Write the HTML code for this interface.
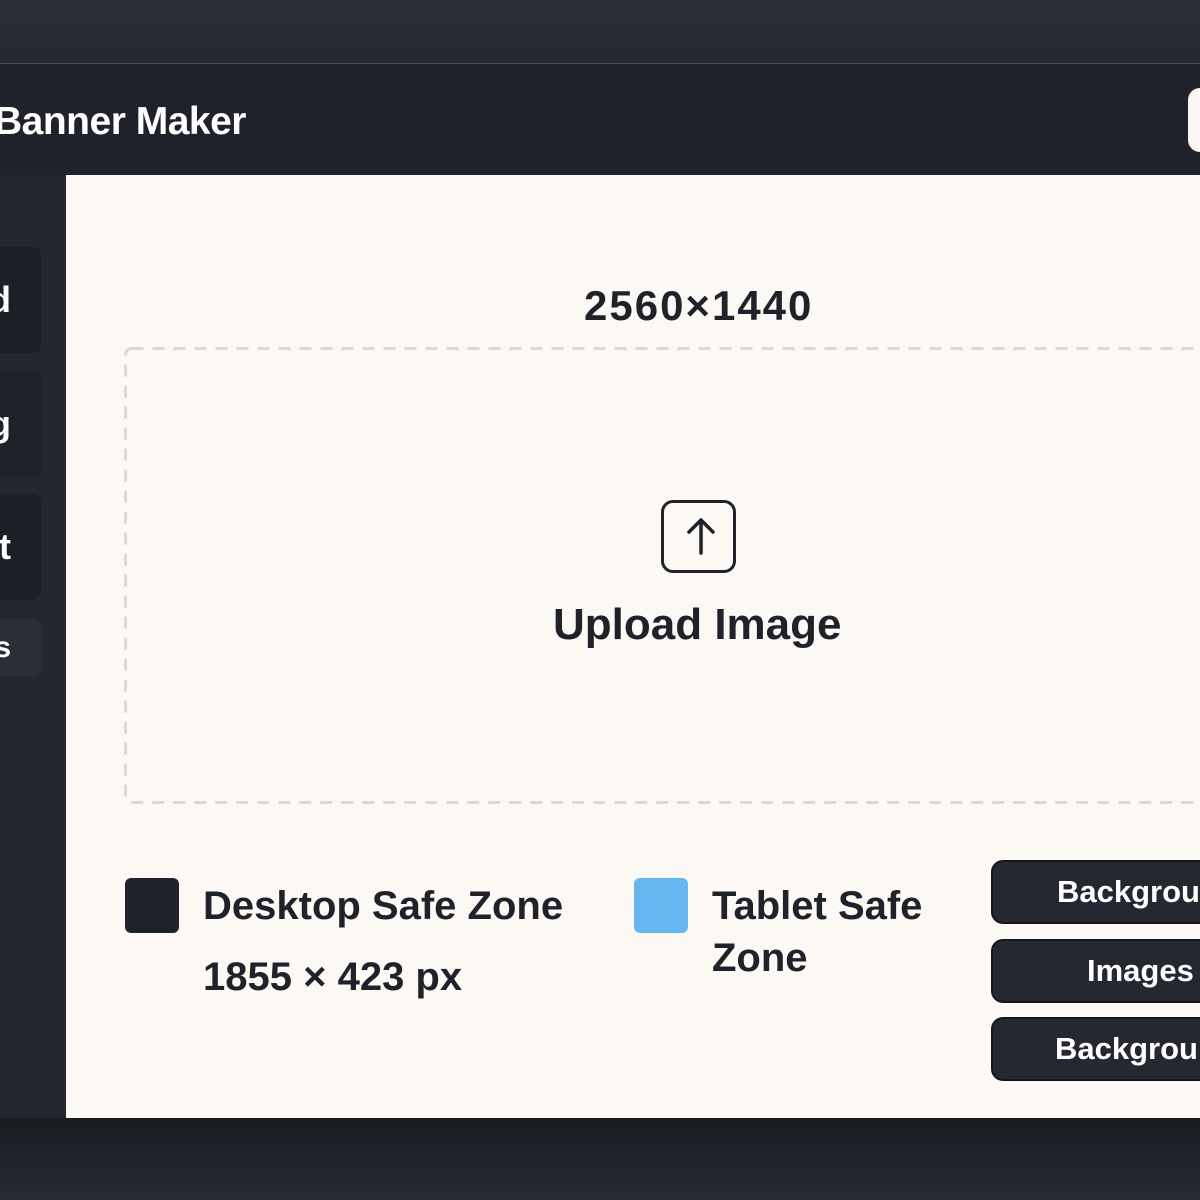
<!DOCTYPE html>
<html><head><meta charset="utf-8"><style>
*{margin:0;padding:0;box-sizing:border-box}
body{width:1200px;height:1200px;overflow:hidden;background:linear-gradient(#2a2d36,#1f222a 60px,#20232b);font-family:"Liberation Sans",sans-serif;position:relative}
.top{position:absolute;left:0;top:0;width:1200px;height:64px;background:linear-gradient(#2b2e37,#252830);border-bottom:1px solid #4a4d55}
.hdr{position:absolute;left:0;top:65px;width:1200px;height:110px;background:#1f222a}
.title{position:absolute;left:-6px;top:100px;color:#fff;font-size:39px;font-weight:bold;letter-spacing:-0.5px}
.hbtn{position:absolute;left:1188px;top:88px;width:40px;height:64px;background:#fcf7f2;border-radius:12px}
.side{position:absolute;left:0;top:175px;width:66px;height:943px;background:#242730}
.si{position:absolute;left:-20px;width:61px;height:106px;background:#1c1f26;border-radius:8px;color:#fff;font-size:36px;font-weight:bold;line-height:106px;text-align:right;padding-right:30px}
.main{position:absolute;left:66px;top:175px;width:1134px;height:943px;background:#fcf8f4}
.bottom{position:absolute;left:0;top:1118px;width:1200px;height:82px;background:linear-gradient(#1a1c22,#272a32)}
.dim{position:absolute;left:584px;top:282px;font-size:42px;font-weight:bold;color:#1f222a;letter-spacing:2px}
.drop{position:absolute;left:124px;top:347px}
.icon{position:absolute;left:661px;top:500px;width:75px;height:73px;border:3.5px solid #1f222a;border-radius:12px}
.up{position:absolute;left:553px;top:600px;font-size:44px;font-weight:bold;color:#1f222a}
.sw{position:absolute;width:54px;height:55px;border-radius:6px}
.t{position:absolute;font-size:40px;font-weight:bold;color:#1f222a;line-height:52px}
.b{position:absolute;left:991px;width:240px;height:64px;background:#252830;border:2px solid #14161b;border-radius:12px;color:#fff;font-size:31px;font-weight:bold;line-height:60px;padding-left:64px}
</style></head><body>
<div class="top"></div>
<div class="hdr"></div>
<div class="title">Banner Maker</div>
<div class="hbtn"></div>
<div class="side">
<div class="si" style="top:72px">d</div>
<div class="si" style="top:196px;background:#1e2128">g</div>
<div class="si" style="top:319px">t</div>
<div class="si" style="top:444px;height:57px;line-height:57px;background:#2b2e37;font-size:30px">s</div>
</div>
<div class="main"></div>
<div class="dim">2560×1440</div>
<svg class="drop" width="1110" height="460"><rect x="1.5" y="1.5" width="1100" height="454" rx="6" fill="none" stroke="#dcd8d4" stroke-width="3" stroke-dasharray="12 9"/></svg>
<div class="icon"><svg width="68" height="66" viewBox="0 0 68 66"><path d="M37 50V17M25 29L37 17L49 29" stroke="#1f222a" stroke-width="3.5" fill="none" stroke-linecap="round" stroke-linejoin="round"/></svg></div>
<div class="up">Upload Image</div>
<div class="sw" style="left:125px;top:878px;background:#1f222a"></div>
<div class="t" style="left:203px;top:880px">Desktop Safe Zone</div>
<div class="t" style="left:203px;top:951px">1855 × 423 px</div>
<div class="sw" style="left:634px;top:878px;background:#66b6f0"></div>
<div class="t" style="left:712px;top:880px">Tablet Safe<br>Zone</div>
<div class="b" style="top:860px">Background</div>
<div class="b" style="top:939px;padding-left:94px">Images</div>
<div class="b" style="top:1017px;padding-left:62px">Background</div>
<div class="bottom"></div>
</body></html>
